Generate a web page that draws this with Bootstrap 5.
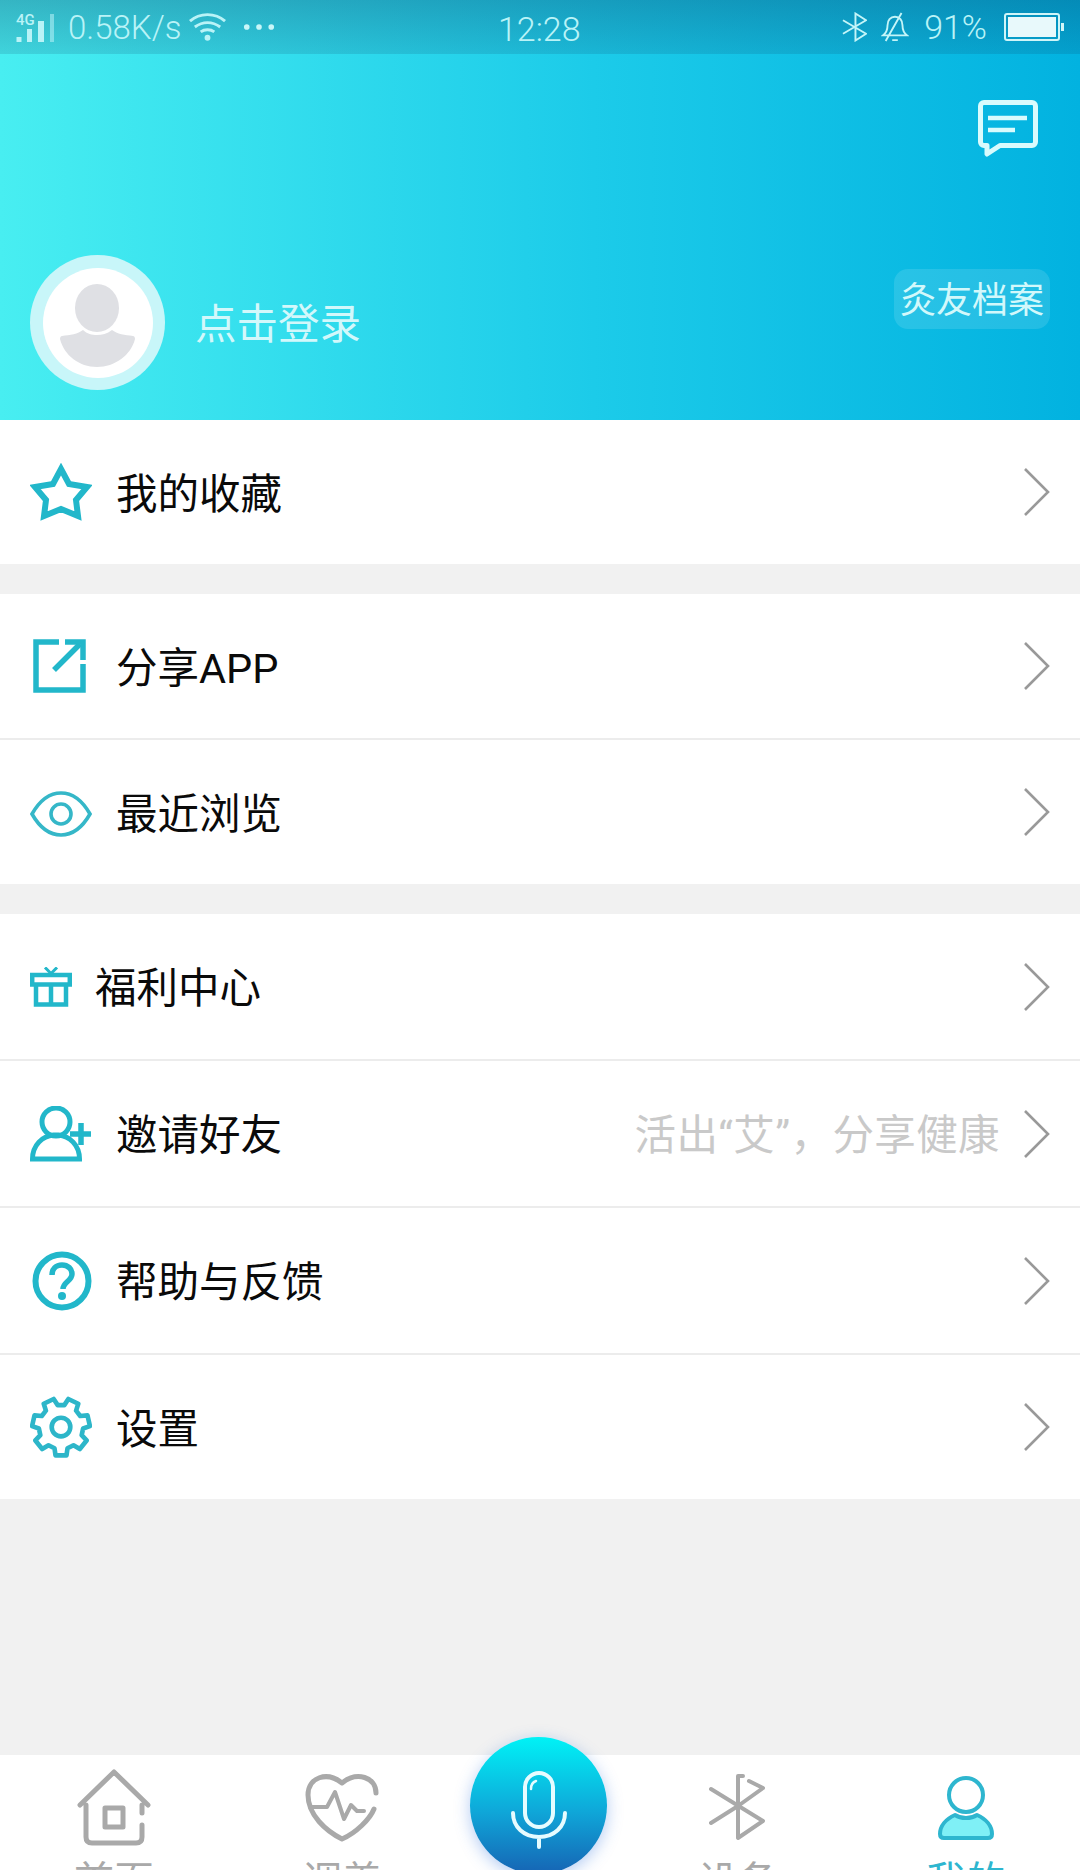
<!doctype html>
<html lang="zh-CN">
<head>
<meta charset="utf-8">
<title>我的</title>
<link href="https://cdn.jsdelivr.net/npm/bootstrap@5.3.0/dist/css/bootstrap.min.css" rel="stylesheet">
<style>
html,body{height:1870px;overflow:hidden}
body{width:1080px;background:#f1f1f1;font-family:Roboto,"Noto Sans CJK SC",sans-serif;color:#0a0a0a}
.screen{height:1870px;display:flex;flex-direction:column}
.hero{height:420px;background:linear-gradient(90deg,#48eef1 0%,#1ccbe9 55%,#02b2e0 100%);display:flex;flex-direction:column}
.statusline{height:54px;padding:0 16px;background:linear-gradient(180deg,rgba(10,50,90,.3),rgba(10,50,90,.14));color:#b9f3f7;font-weight:300;font-size:33px;line-height:1;position:relative}
.statusline .clock{font-size:34px;position:absolute;left:498px;top:12px}
.four-g{font-size:15px;font-weight:500;position:absolute;left:16px;top:13px}
.st-pct{font-size:34px;margin-left:15px}
.sig-ico{margin-top:2px}
.spd-txt{margin-left:12px}
.wifi-ico{margin-left:7px}
.dots-ico{margin-left:17px}
.bell-ico{margin-left:14px}
.batt-ico{margin-left:17px}
.chat-wrap{padding:46px 42px 0 0;display:flex;justify-content:flex-end}
.hero-main{margin-top:auto;padding:0 30px 30px 30px;display:flex;align-items:flex-start}
.avatar-ring{width:135px;height:135px;border-radius:50%;background:#c8f6f9;display:flex;align-items:center;justify-content:center;flex:none}
.avatar-core{width:110px;height:110px;border-radius:50%;background:#fff;display:flex;align-items:center;justify-content:center}
.avatar-core svg{margin-top:6px}
.login-txt{font-size:41.5px;line-height:135px;height:135px;margin-left:30px;padding-top:2px;color:#d2f8fb}
.archive-pill{margin-left:auto;margin-top:14px;width:156px;height:60px;border-radius:14px;background:rgba(255,255,255,.12);font-size:36px;line-height:64px;text-align:center;color:#d2f8fb;white-space:nowrap}
.menu-sec{margin-bottom:30px;--bs-list-group-border-width:2px;--bs-list-group-border-color:#ececec;--bs-list-group-bg:#fff}
.menu-sec .list-group-item{height:146px;padding:0 30px 0 30px;font-size:41.5px;color:#0a0a0a}
.menu-sec .list-group-item:last-child{height:144px}
.menu-sec.tall .list-group-item{height:147px}
.menu-sec.tall .list-group-item:last-child{height:144px}
.row-label{margin-top:6px}
.icon-slot{width:86px;flex:none;display:flex;align-items:center}
.icon-slot.slim{width:65px}
.icon-eye{margin-top:3px}
.icon-help{margin-left:2px}
.hint-txt{margin-left:auto;color:#c9c9c9;margin-right:24px;margin-top:6px;letter-spacing:.4px}
.chev{flex:none}
.chev.push{margin-left:auto}
.tabbar{margin-top:auto;height:115px;background:#fff;position:relative;display:grid;grid-template-columns:228px 228px 168px 228px 228px}
.tab-cell{display:flex;flex-direction:column;align-items:center;padding-top:14px;font-size:40px;line-height:1;color:#a9a9a9;height:115px}
.tab-cell.on{color:#2eb6cf}
.tab-cell svg{display:block;height:78px;flex:none}
.tab-cell span{margin-top:15px;white-space:nowrap}
.mic-btn{position:absolute;left:470px;top:-18px;width:137px;height:137px;border-radius:50%;background:linear-gradient(180deg,#00f2f6 0%,#0fa6d8 55%,#1664b4 100%);box-shadow:0 4px 16px rgba(40,110,220,.35);display:flex;align-items:center;justify-content:center}
.mic-btn svg{margin-top:8px}
</style>
</head>
<body>
<div class="screen">
  <header class="hero">
    <div class="statusline d-flex align-items-center">
      <span class="four-g">4G</span>
      <svg class="sig-ico" width="40" height="30" viewBox="0 0 40 30" fill="#b9f3f7"><rect x="0.500" y="24" width="5" height="5"/><rect x="11" y="16" width="5" height="13"/><rect x="22" y="8" width="6" height="21"/><rect x="34" y="1" width="4" height="28" opacity=".55"/></svg>
      <span class="spd-txt">0.58K/s</span>
      <svg class="wifi-ico" width="37" height="32" viewBox="0 0 38 32" fill="none" stroke="#b9f3f7" stroke-width="3"><path d="M1 10C11 1 27 1 37 10M6 16c8-6 18-6 26 0M12 21c4-3 10-3 14 0"/><circle cx="19" cy="27" r="3" fill="#b9f3f7" stroke="none"/></svg>
      <svg class="dots-ico" width="32" height="8" viewBox="0 0 34 8" fill="#c8f6f8"><circle cx="4" cy="4" r="3"/><circle cx="17" cy="4" r="3"/><circle cx="30" cy="4" r="3"/></svg>
      <span class="clock">12:28</span>
      <svg class="ms-auto" width="25" height="30" viewBox="0 0 26 30" fill="none" stroke="#c4f5f8" stroke-width="2"><path d="M1 8l24 14-11 7V1l11 7L1 22"/></svg>
      <svg class="bell-ico" width="28" height="32" viewBox="0 0 30 32" fill="none" stroke="#c4f5f8" stroke-width="2"><path d="M2 25c4-3 5-6 5-11 0-5 3-9 8-9s8 4 8 9c0 5 1 8 5 11zM12 30h6M22 1L5 31"/></svg>
      <span class="st-pct">91%</span>
      <svg class="batt-ico" width="60" height="28" viewBox="0 0 60 28"><rect x="1" y="1" width="54" height="26" rx="2" fill="none" stroke="#d0f5f8" stroke-width="2"/><rect x="4" y="4" width="48" height="20" fill="#e8f9fb"/><rect x="57" y="10" width="3" height="8" fill="#d0f5f8"/></svg>
    </div>
    <div class="chat-wrap">
      <svg width="60" height="58" viewBox="0 0 60 58" fill="none" stroke="#d9fbfd"><path d="M6 2.500h48a3.500 3.500 0 0 1 3.500 3.500v36a3.500 3.500 0 0 1-3.500 3.500H22L9 54v-8.500H6A3.500 3.500 0 0 1 2.500 42V6A3.500 3.500 0 0 1 6 2.500z" stroke-width="5" stroke-linejoin="round"/><path d="M10 18h39M10 30h27" stroke-width="4.500"/></svg>
    </div>
    <div class="hero-main">
      <div class="avatar-ring"><div class="avatar-core">
        <svg width="76" height="84" viewBox="0 0 76 84" fill="#dfe0e4"><ellipse cx="37" cy="24" rx="22" ry="24"/><path d="M2 52c8-1 16-2 21-6 4 4 9 5 14 5s10-1 15-5c5 4 13 5 21 6 1 0 2 1 2 3-4 16-20 28-38 28S4 71 0 55c0-2 1-3 2-3z"/></svg>
      </div></div>
      <div class="login-txt">点击登录</div>
      <div class="archive-pill">灸友档案</div>
    </div>
  </header>

  <div class="list-group list-group-flush menu-sec">
    <div class="list-group-item d-flex align-items-center">
      <div class="icon-slot"><svg width="62" height="58" viewBox="0 0 62 58" fill="none" stroke="#22b7ca" stroke-width="6"><path d="M31 6l8 15 18 3-11 13 2 16-17-7-17 7 2-16L5 24l18-3z"/></svg></div>
      <span class="row-label">我的收藏</span>
      <svg class="chev push" width="26" height="48" viewBox="0 0 26 48" fill="none" stroke="#999" stroke-width="2.6"><path d="M1 1l23 23L1 47"/></svg>
    </div>
  </div>

  <div class="list-group list-group-flush menu-sec">
    <div class="list-group-item d-flex align-items-center">
      <div class="icon-slot"><svg width="56" height="54" viewBox="0 0 56 54" fill="none" stroke="#22b7ca" stroke-width="5.5"><path d="M29 3H6v48h47V25"/><path d="M24 31L50 5"/><path d="M35 3h18v18"/></svg></div>
      <span class="row-label">分享APP</span>
      <svg class="chev push" width="26" height="48" viewBox="0 0 26 48" fill="none" stroke="#999" stroke-width="2.6"><path d="M1 1l23 23L1 47"/></svg>
    </div>
    <div class="list-group-item d-flex align-items-center">
      <div class="icon-slot"><svg class="icon-eye" width="62" height="46" viewBox="0 0 62 46" fill="none" stroke="#35b7c8" stroke-width="3.6"><path d="M2 23C10 9 20 2 31 2s21 7 29 21c-8 14-18 21-29 21S10 37 2 23z"/><circle cx="31" cy="23" r="10"/></svg></div>
      <span class="row-label">最近浏览</span>
      <svg class="chev push" width="26" height="48" viewBox="0 0 26 48" fill="none" stroke="#999" stroke-width="2.6"><path d="M1 1l23 23L1 47"/></svg>
    </div>
  </div>

  <div class="list-group list-group-flush menu-sec tall">
    <div class="list-group-item d-flex align-items-center">
      <div class="icon-slot slim"><svg width="42" height="40" viewBox="0 0 42 40" fill="none" stroke="#22b7ca" stroke-width="4.500"><path d="M2.200 8h37.600v9.500H2.200zM6 17.500v20h30v-20M21 17.500v20"/><path d="M15 .5l6 6 6-6" stroke-width="3"/></svg></div>
      <span class="row-label">福利中心</span>
      <svg class="chev push" width="26" height="48" viewBox="0 0 26 48" fill="none" stroke="#999" stroke-width="2.6"><path d="M1 1l23 23L1 47"/></svg>
    </div>
    <div class="list-group-item d-flex align-items-center">
      <div class="icon-slot"><svg width="62" height="56" viewBox="0 0 62 56" fill="none" stroke="#22b7ca" stroke-width="5"><circle cx="26" cy="16" r="14"/><path d="M2.500 53c0-14 10-23 21-24h5c11 1 21 10 21 24z"/><path d="M40 28h21M51 17v22" stroke-width="5.500"/></svg></div>
      <span class="row-label">邀请好友</span>
      <span class="hint-txt">活出“艾”，分享健康</span>
      <svg class="chev" width="26" height="48" viewBox="0 0 26 48" fill="none" stroke="#999" stroke-width="2.6"><path d="M1 1l23 23L1 47"/></svg>
    </div>
    <div class="list-group-item d-flex align-items-center">
      <div class="icon-slot"><svg class="icon-help" width="60" height="60" viewBox="0 0 60 60" fill="none" stroke="#22b7ca"><circle cx="30" cy="30" r="26.500" stroke-width="6"/><path d="M20 24c0-6 4-10 10-10s10 4 10 9c0 7-9 8-9 15" stroke-width="5.500"/><circle cx="30" cy="45" r="4" fill="#22b7ca" stroke="none"/></svg></div>
      <span class="row-label">帮助与反馈</span>
      <svg class="chev push" width="26" height="48" viewBox="0 0 26 48" fill="none" stroke="#999" stroke-width="2.6"><path d="M1 1l23 23L1 47"/></svg>
    </div>
    <div class="list-group-item d-flex align-items-center">
      <div class="icon-slot"><svg width="62" height="62" viewBox="0 0 60 60" fill="none" stroke="#2db6c9" stroke-width="4.500" stroke-linejoin="round"><path d="M50 37.900L54.800 43 48.200 51.300 42.100 47.700 36.300 50.600 35.300 57.500 24.700 57.500 23.700 50.600 17.900 47.700 11.800 51.300 5.200 43 10 37.900 8.600 31.500 2 29.100 4.400 18.700 11.400 19.300 15.400 14.200 13.300 7.500 22.900 2.900 26.800 8.800 33.200 8.800 37.100 2.900 46.700 7.500 44.600 14.200 48.600 19.300 55.600 18.700 58 29.100 51.400 31.500z"/><circle cx="30" cy="30" r="9"/></svg></div>
      <span class="row-label">设置</span>
      <svg class="chev push" width="26" height="48" viewBox="0 0 26 48" fill="none" stroke="#999" stroke-width="2.6"><path d="M1 1l23 23L1 47"/></svg>
    </div>
  </div>

  <nav class="tabbar">
    <div class="tab-cell">
      <svg width="74" height="78" viewBox="0 0 74 78" fill="none" stroke="#a9a9a9" stroke-width="5" stroke-linejoin="round" stroke-linecap="round"><path d="M3 36L37 3l34 33M9 36v32q0 6 6 6h44q6 0 6-6v-12M65 36v8"/><rect x="28" y="39" width="18" height="19"/></svg>
      <span>首页</span>
    </div>
    <div class="tab-cell">
      <svg width="74" height="78" viewBox="0 0 74 78" fill="none" stroke="#a9a9a9" stroke-width="5" stroke-linecap="round" stroke-linejoin="round"><path d="M71 24C71 8 52 2 37 14 22 2 3 8 3 26c0 20 18 36 34 44 14-6 28-20 32-30"/><path d="M5 38h17l8-15 9 27 7-14 6 6h7" stroke-width="4"/></svg>
      <span>调养</span>
    </div>
    <div></div>
    <div class="tab-cell">
      <svg width="58" height="78" viewBox="0 0 58 78" fill="none" stroke="#a9a9a9" stroke-width="4" stroke-linecap="round" stroke-linejoin="round"><path d="M2 20l52 32-25 17V7h5M40 12l14 7-25 18L2 54"/></svg>
      <span>设备</span>
    </div>
    <div class="tab-cell on">
      <svg width="58" height="78" viewBox="0 0 58 78"><path d="M18 46C9 50 3 57 3 65q0 4 4 4h44q4 0 4-4c0-8-6-15-15-19-6 4-16 4-22 0z" fill="#7ff0f6" stroke="#2eb6cf" stroke-width="4" stroke-linejoin="round"/><circle cx="29" cy="26" r="17" fill="none" stroke="#2eb6cf" stroke-width="4"/></svg>
      <span>我的</span>
    </div>
    <div class="mic-btn">
      <svg width="58" height="78" viewBox="0 0 58 78" fill="none" stroke="#e6fcff" stroke-width="4" stroke-linecap="round"><rect x="15" y="2" width="28" height="54" rx="14"/><path d="M3 42c0 14 11 24 26 24s26-10 26-24M29 66v10"/><path d="M21 18c0-4 2-7 5-8" stroke-width="2.500"/></svg>
    </div>
  </nav>
</div>
</body>
</html>
